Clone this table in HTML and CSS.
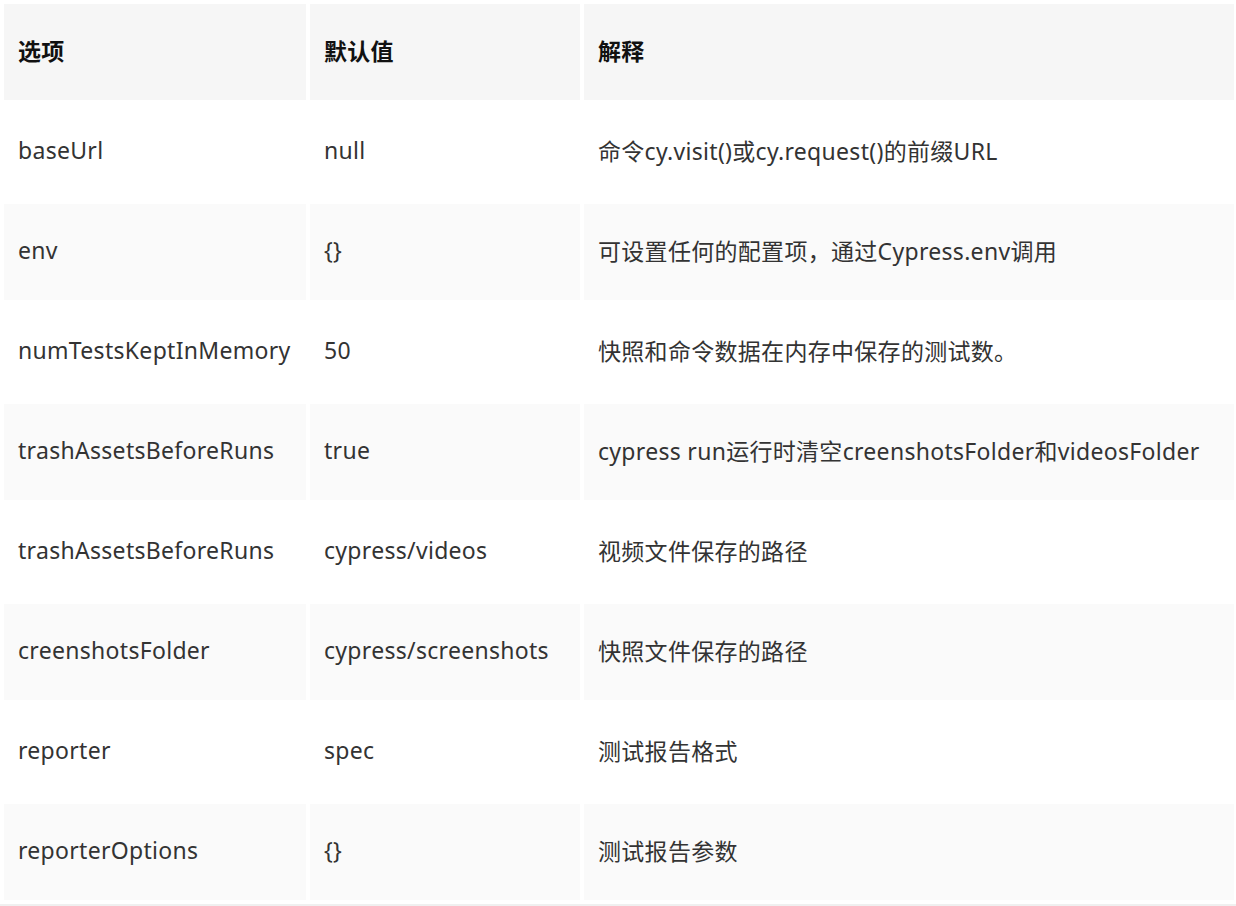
FILE: index.html
```html
<!DOCTYPE html>
<html lang="zh">
<head>
<meta charset="utf-8">
<link rel="stylesheet" href="styles.css">
</head>
<body>
<table class="opts">
  <colgroup>
    <col class="c1"><col class="c2"><col class="c3">
  </colgroup>
  <thead>
    <tr><th>选项</th><th>默认值</th><th>解释</th></tr>
  </thead>
  <tbody>
    <tr><td>baseUrl</td><td>null</td><td>命令cy.visit()或cy.request()的前缀URL</td></tr>
    <tr><td>env</td><td>{}</td><td>可设置任何的配置项，通过Cypress.env调用</td></tr>
    <tr><td>numTestsKeptInMemory</td><td>50</td><td>快照和命令数据在内存中保存的测试数。</td></tr>
    <tr><td>trashAssetsBeforeRuns</td><td>true</td><td>cypress run运行时清空creenshotsFolder和videosFolder</td></tr>
    <tr><td>trashAssetsBeforeRuns</td><td>cypress/videos</td><td>视频文件保存的路径</td></tr>
    <tr><td>creenshotsFolder</td><td>cypress/screenshots</td><td>快照文件保存的路径</td></tr>
    <tr><td>reporter</td><td>spec</td><td>测试报告格式</td></tr>
    <tr><td>reporterOptions</td><td>{}</td><td>测试报告参数</td></tr>
  </tbody>
</table>
</body>
</html>
```

FILE: styles.css
```css
html, body {
  margin: 0;
  padding: 0;
  background: #ffffff;
  overflow: hidden;
}

body {
  font-family: "Noto Sans", "Noto Sans CJK SC", sans-serif;
  font-size: 23px;
  letter-spacing: 0.3px;
  color: #333333;
}

.opts {
  width: 1238px;
  border-collapse: separate;
  border-spacing: 4px;
  table-layout: fixed;
  border-bottom: 2px solid #f0f0f0;
}

.c1 { width: 302px; }
.c2 { width: 270px; }
.c3 { width: 650px; }

.opts th,
.opts td {
  height: 96px;
  padding: 0 14px 4px;
  text-align: left;
  vertical-align: middle;
  white-space: nowrap;
  box-sizing: border-box;
}

.opts th {
  background: #f6f6f6;
  color: #111111;
  font-weight: 700;
}

.opts tbody tr:nth-child(even) td {
  background: #fafafa;
}
```
